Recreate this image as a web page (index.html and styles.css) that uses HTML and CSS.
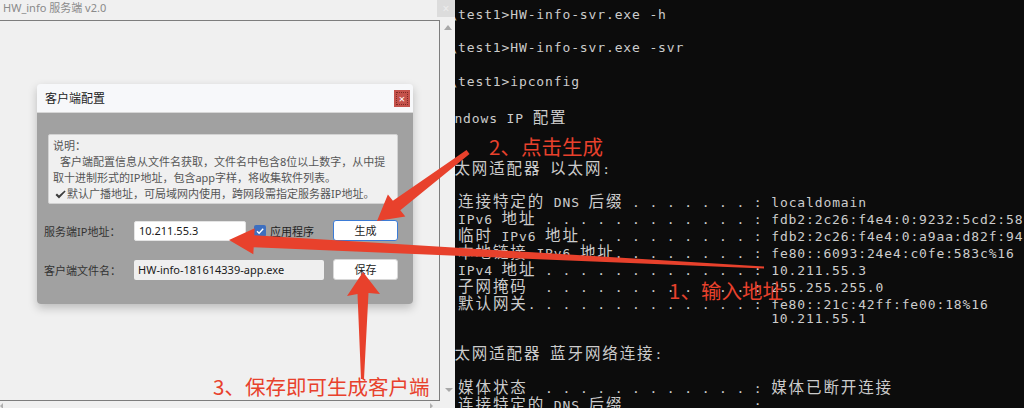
FILE: index.html
```html
<!DOCTYPE html>
<html>
<head>
	<meta charset="UTF-8">
	<title>HW_info 服务端 v2.0</title>
	<link rel="stylesheet" href="styles.css">
</head>
<body>
	<div class="screen">
		<div class="app">
			<div class="app-bar">
				<span class="app-title">HW_info 服务端 v2.0</span>
				<span class="app-x">×</span>
			</div>
			<div class="app-main">
				<div class="frame">
					<div class="dlg">
						<div class="dlg-head">
							<span>客户端配置</span>
							<span class="dlg-close">×</span>
						</div>
						<div class="dlg-body">
							<div class="tips">
								<div>说明：</div>
								<div class="indent">客户端配置信息从文件名获取，文件名中包含8位以上数字，从中提</div>
								<div>取十进制形式的IP地址，包含app字样，将收集软件列表。</div>
								<div class="tick-line">
									<svg class="tick" width="11" height="9" viewBox="0 0 11 9"><path d="M0.5 5 L2 3.6 L4 5.6 L9.6 0.4 L10.6 1.4 L4 8.4 Z" fill="#3c3c3c"/></svg>默认广播地址，可局域网内使用，跨网段需指定服务器IP地址。
								</div>
							</div>
							<div class="row">
								<label class="lbl">服务端IP地址：</label>
								<div class="field ip">10.211.55.3</div>
								<span class="chk"><svg width="12" height="12" viewBox="0 0 12 12"><path d="M3 6.2 L5.1 8.2 L9.2 3.8" fill="none" stroke="#fff" stroke-width="1.4"/></svg></span>
								<span class="chk-text">应用程序</span>
								<span class="btn on">生成</span>
							</div>
							<div class="row row2">
								<label class="lbl">客户端文件名：</label>
								<div class="field name">HW-info-181614339-app.exe</div>
								<span class="btn">保存</span>
							</div>
						</div>
					</div>
				</div>
				<div class="vbar">
					<i class="tri up"></i>
					<i class="tri down"></i>
				</div>
			</div>
			<div class="hbar">
				<i class="tri left"></i>
				<i class="tri right"></i>
			</div>
		</div>

		<div class="term">
			<div class="term-in">
				<div class="ln cmd">\test1&gt;HW-info-svr.exe -h</div>
				<div class="ln"></div>
				<div class="ln cmd">\test1&gt;HW-info-svr.exe -svr</div>
				<div class="ln"></div>
				<div class="ln cmd">\test1&gt;ipconfig</div>
				<div class="ln"></div>
				<div class="ln hd">Windows IP <span class="w">配置</span></div>
				<div class="ln"></div>
				<div class="ln"></div>
				<div class="ln hd"><span class="w">以太网适配器</span> <span class="w">以太网</span>:</div>
				<div class="ln"></div>
				<div class="ln">   <span class="w">连接特定的</span> DNS <span class="w">后缀</span> . . . . . . . : localdomain</div>
				<div class="ln">   IPv6 <span class="w">地址</span> . . . . . . . . . . . . : fdb2:2c26:f4e4:0:9232:5cd2:5801:8b10</div>
				<div class="ln">   <span class="w">临时</span> IPv6 <span class="w">地址</span>. . . . . . . . . . : fdb2:2c26:f4e4:0:a9aa:d82f:9427:1e3c</div>
				<div class="ln">   <span class="w">本地链接</span> IPv6 <span class="w">地址</span>. . . . . . . . : fe80::6093:24e4:c0fe:583c%16</div>
				<div class="ln">   IPv4 <span class="w">地址</span> . . . . . . . . . . . . : 10.211.55.3</div>
				<div class="ln">   <span class="w">子网掩码</span>  . . . . . . . . . . . . : 255.255.255.0</div>
				<div class="ln">   <span class="w">默认网关</span>. . . . . . . . . . . . . : fe80::21c:42ff:fe00:18%16</div>
				<div class="ln">                                       10.211.55.1</div>
				<div class="ln"></div>
				<div class="ln hd"><span class="w">以太网适配器</span> <span class="w">蓝牙网络连接</span>:</div>
				<div class="ln"></div>
				<div class="ln">   <span class="w">媒体状态</span>  . . . . . . . . . . . . : <span class="w">媒体已断开连接</span></div>
				<div class="ln">   <span class="w">连接特定的</span> DNS <span class="w">后缀</span> . . . . . . . :</div>
			</div>
		</div>

		<!-- red hand-drawn arrows over both windows -->
		<svg class="arrows" width="1024" height="408" viewBox="0 0 1024 408">
			<polygon points="229,240 254.7,228.3 254.3,235.3 764,266.4 764,268.6 253.7,247.3 253.3,254.3"/>
			<polygon points="377,221 387.9,194.5 392.9,200.8 466.5,150 469.5,154 400.3,210.2 405.3,216.5"/>
			<polygon points="363,272 380,294 368.5,293 364,379 361,379 357.5,294 347,296"/>
		</svg>
		<span class="note n1">1、输入地址</span>
		<span class="note n2">2、点击生成</span>
		<span class="note n3">3、保存即可生成客户端</span>
	</div>
</body>
</html>
```

FILE: styles.css
```css
body{
	margin: 0;
	overflow: hidden;
	background: #f0f0f0;
	font-family: "Noto Sans", "Noto Sans CJK SC", sans-serif;
}
.screen{
	position: relative;
	display: flex;
	width: 1024px;
	height: 408px;
	overflow: hidden;
}

/* left: the app window */
.app{
	width: 455px;
	flex: none;
	display: flex;
	flex-direction: column;
	background: #f0f0f0;
}
.app-bar{
	height: 20px;
	display: flex;
	justify-content: space-between;
	align-items: flex-start;
}
.app-title{
	padding: 1px 0 0 3px;
	font-size: 11px;
	line-height: 13px;
	color: #8a8a8a;
}
.app-x{
	width: 18px;
	height: 17px;
	background: #dcdcdc;
	color: #ececec;
	font-size: 12px;
	line-height: 17px;
	text-align: center;
}
.app-main{
	height: 381px;
	display: flex;
}
.frame{
	width: 440px;
	height: 381px;
	box-sizing: border-box;
	border: 1px solid #7d7d7d;
	border-left: none;
	padding: 63px 0 0 37px;
}
.vbar{
	width: 15px;
	position: relative;
}
.hbar{
	height: 7px;
	position: relative;
}
.tri{
	position: absolute;
	width: 0;
	height: 0;
	border: 4px solid transparent;
}
.tri.up{
	left: 4px;
	top: 1px;
	border-bottom: 5px solid #a8a8a8;
}
.tri.down{
	left: 5px;
	bottom: 5px;
	border-top: 4px solid #a8a8a8;
}
.tri.left{
	left: 0;
	top: 2px;
	border-width: 3px;
	border-right: 3px solid #b0b0b0;
	border-left: none;
}
.tri.right{
	left: 430px;
	top: 2px;
	border-width: 3px;
	border-left: 3px solid #b0b0b0;
	border-right: none;
}

/* dialog */
.dlg{
	width: 376px;
	height: 220px;
	border-radius: 4px;
	overflow: hidden;
	box-shadow: 0 4px 10px rgba(0,0,0,.22);
	display: flex;
	flex-direction: column;
}
.dlg-head{
	height: 28px;
	flex: none;
	display: flex;
	align-items: center;
	justify-content: space-between;
	padding: 0 3px 0 8px;
	background: #f7f8fa;
	border-bottom: 1px solid #d6d6d6;
	font-size: 12px;
	color: #222;
}
.dlg-close{
	width: 16px;
	height: 17px;
	background: #c4524b;
	color: #fff;
	font-size: 11px;
	line-height: 17px;
	text-align: center;
	outline: 1px dotted #7e2a24;
	outline-offset: -3px;
}
.dlg-body{
	flex: 1;
	background: #a1a1a1;
	padding: 21px 15px 0 11px;
}
.tips{
	height: 70px;
	box-sizing: border-box;
	padding: 3px 4px;
	background: #f0f0f0;
	border: 1px solid #d2d2d2;
	border-radius: 2px;
	font-size: 11px;
	line-height: 16px;
	color: #555;
	white-space: nowrap;
}
.tips .indent{
	padding-left: 7px;
}
.tick{
	margin: 0 1px 0 2px;
	vertical-align: -1px;
}
.row{
	display: flex;
	align-items: center;
	height: 21px;
	margin: 16px 0 0 -4px;
}
.row2{
	margin-top: 18px;
}
.lbl{
	width: 73px;
	text-align: right;
	font-size: 11px;
	color: #333;
	white-space: nowrap;
}
.field{
	height: 20px;
	box-sizing: border-box;
	margin-left: 17px;
	padding: 0 4px;
	border-radius: 2px;
	font-size: 11px;
	line-height: 20px;
	color: #1a1a1a;
}
.field.ip{
	width: 112px;
	background: #fff;
	border: 1px solid #e4e4e4;
	line-height: 18px;
}
.field.name{
	width: 190px;
	background: #efefef;
}
.chk{
	width: 12px;
	height: 12px;
	margin-left: 8px;
	border-radius: 2px;
	background: #3d6fc0;
	display: flex;
}
.chk-text{
	margin-left: 4px;
	font-size: 11px;
	color: #222;
}
.btn{
	width: 65px;
	height: 21px;
	box-sizing: border-box;
	margin-left: auto;
	background: #fff;
	border: 1px solid #d8d8d8;
	border-radius: 3px;
	font-size: 11px;
	line-height: 19px;
	text-align: center;
	color: #222;
}
.btn.on{
	border-color: #3b7bd6;
}

/* right: the console, 8.7px cells */
.term{
	flex: 1;
	background: #0c0c0c;
	overflow: hidden;
	color: #cccccc;
	font-family: "DejaVu Sans Mono", monospace;
	font-size: 13px;
	letter-spacing: .87px;
}
.term-in{
	margin-left: -23px;
	padding-top: 6.5px;
}
.ln{
	height: 16.9px;
	line-height: 16.9px;
	white-space: pre;
}
.ln.cmd{
	padding-left: 17.4px;
}
.ln.hd{
	padding-left: 5px;
}
.w{
	font-family: "Noto Sans CJK SC", sans-serif;
	font-size: 15.5px;
	letter-spacing: 1.9px;
}

/* annotations */
.arrows{
	position: absolute;
	left: 0;
	top: 0;
	pointer-events: none;
	fill: #e8412c;
}
.note{
	position: absolute;
	font-family: "Noto Sans CJK SC", sans-serif;
	font-size: 20.5px;
	line-height: 1;
	color: #e8412c;
	white-space: nowrap;
}
.n1{
	left: 669px;
	top: 280px;
}
.n2{
	left: 489px;
	top: 136px;
}
.n3{
	left: 213px;
	top: 376px;
}
```
